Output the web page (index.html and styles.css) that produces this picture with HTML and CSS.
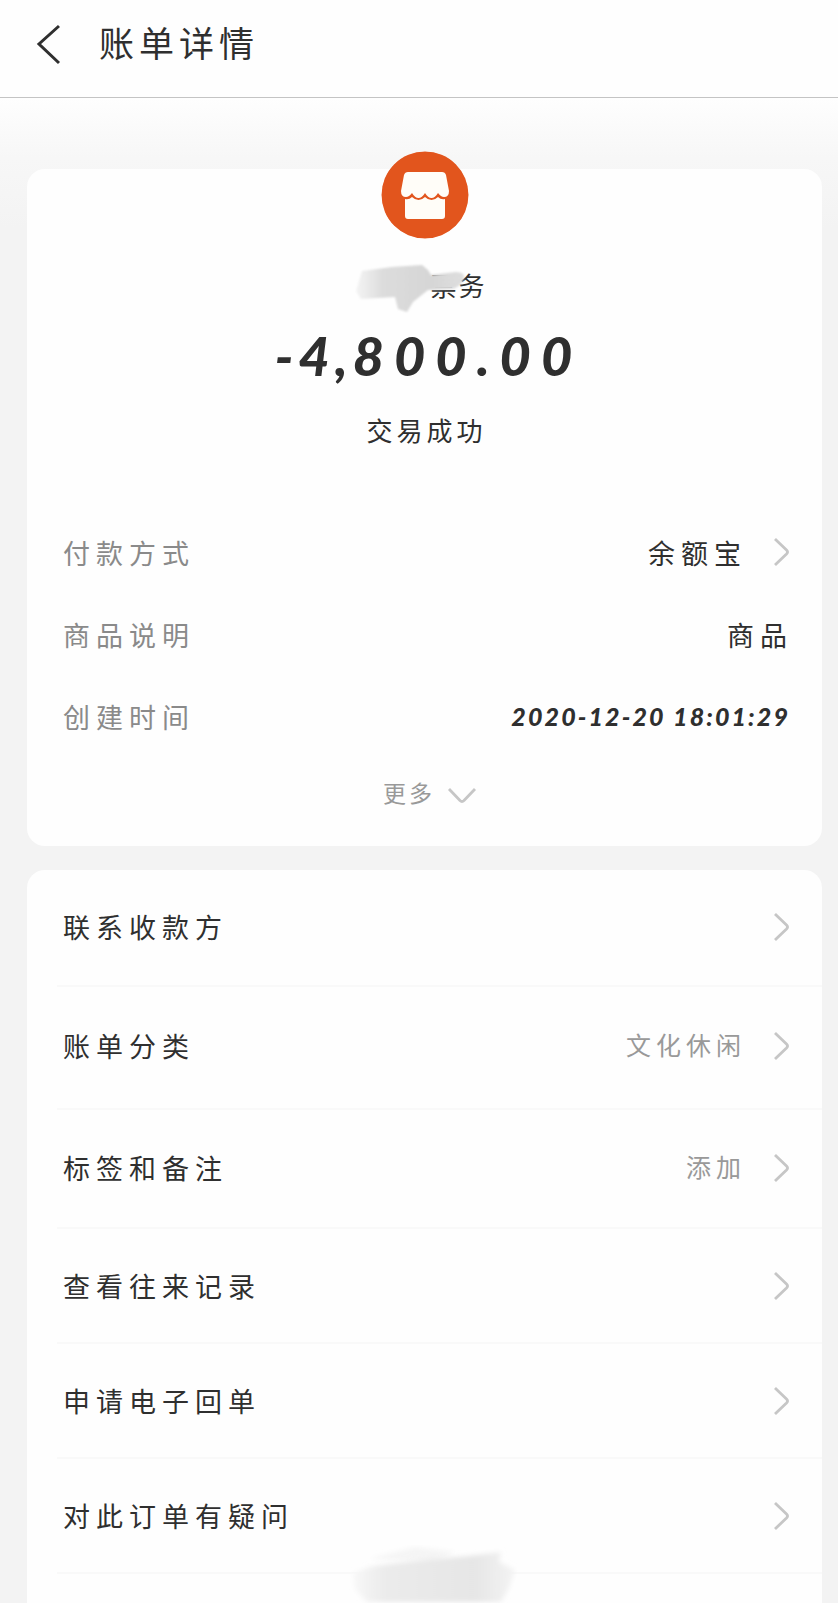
FILE: index.html
```html
<!DOCTYPE html>
<html lang="zh-CN">
<head>
<meta charset="utf-8">
<title>账单详情</title>
<link rel="stylesheet" href="styles.css">
</head>
<body>
<header class="topbar">
  <svg class="back" width="26" height="42" viewBox="0 0 26 42"><path d="M23 3 3 21l20 19"/></svg>
  <h1 class="title">账单详情</h1>
</header>
<main class="page">
  <section class="card summary">
    <svg class="shop" width="88" height="88" viewBox="0 0 88 88">
      <circle cx="44" cy="44" r="43.5" fill="#e2551d"/>
      <path d="M27 21h34q3 0 4 3l3 16q0 6-5 6-3 0-6-4-3 5-6.500 5T44 42q-3 5-6.500 5T31 42q-3 4-6 4-5 0-5-6l3-16q1-3 4-3z" fill="#fffdf8"/>
      <path d="M24 48q4 1 7-2 3 3 6.500 3t6.500-3q3 3 6.500 3t6.500-3q3 3 7 2v17q0 3-3 3H27q-3 0-3-3z" fill="#fffdf8"/>
    </svg>
    <div class="merchant">
      <span>票务</span>
      <svg class="smudge" width="140" height="60" viewBox="0 0 140 60">
        <defs>
          <linearGradient id="g1"><stop offset="0" stop-color="#f4f4f4"/><stop offset=".25" stop-color="#dcdcdc"/><stop offset=".7" stop-color="#d6d6d6"/><stop offset="1" stop-color="#dedede"/></linearGradient>
          <filter id="b1"><feGaussianBlur stdDeviation="1.3"/></filter>
        </defs>
        <path d="M12 13 42 9l30-2 6 5 3 5 25-3q9 0 8 6-3 9-12 11l-24 1-15 12-6 10-9-3-3-12-34 2-5-8z" fill="url(#g1)" filter="url(#b1)"/>
      </svg>
    </div>
    <div class="amount"><span class="lead">-4,</span>800.00</div>
    <div class="status">交易成功</div>
    <dl class="details">
      <div class="item"><dt>付款方式</dt><dd>余额宝</dd><svg class="chev" width="17" height="30" viewBox="0 0 17 30"><path d="M2 2l11.500 11q2 2 0 4L2 28"/></svg></div>
      <div class="item"><dt>商品说明</dt><dd class="last">商品</dd></div>
      <div class="item"><dt>创建时间</dt><dd class="date">2020-12-20 18:01:29</dd></div>
    </dl>
    <div class="more"><span>更多</span><svg class="chev" width="30" height="17" viewBox="0 0 30 17"><path d="M2 2l11 11.500q2 2 4 0L28 2"/></svg></div>
  </section>
  <nav class="card menu">
    <a class="row"><span>联系收款方</span><svg class="chev" width="17" height="30" viewBox="0 0 17 30"><path d="M2 2l11.500 11q2 2 0 4L2 28"/></svg></a>
    <a class="row"><span>账单分类</span><em>文化休闲</em><svg class="chev" width="17" height="30" viewBox="0 0 17 30"><path d="M2 2l11.500 11q2 2 0 4L2 28"/></svg></a>
    <a class="row"><span>标签和备注</span><em>添加</em><svg class="chev" width="17" height="30" viewBox="0 0 17 30"><path d="M2 2l11.500 11q2 2 0 4L2 28"/></svg></a>
    <a class="row"><span>查看往来记录</span><svg class="chev" width="17" height="30" viewBox="0 0 17 30"><path d="M2 2l11.500 11q2 2 0 4L2 28"/></svg></a>
    <a class="row"><span>申请电子回单</span><svg class="chev" width="17" height="30" viewBox="0 0 17 30"><path d="M2 2l11.500 11q2 2 0 4L2 28"/></svg></a>
    <a class="row"><span>对此订单有疑问</span><svg class="chev" width="17" height="30" viewBox="0 0 17 30"><path d="M2 2l11.500 11q2 2 0 4L2 28"/></svg></a>
    <svg class="footmark" width="180" height="62" viewBox="0 0 180 62">
      <defs>
        <linearGradient id="g2"><stop offset="0" stop-color="#f8f8f8"/><stop offset=".2" stop-color="#ebebeb"/><stop offset=".75" stop-color="#e6e6e6"/><stop offset="1" stop-color="#f4f4f4"/></linearGradient>
        <filter id="b2"><feGaussianBlur stdDeviation="2.500"/></filter>
      </defs>
      <path d="M24 18 70 6l40 5-20 10z" fill="#f5f5f5" filter="url(#b2)"/>
      <path d="M8 32 28 25l50-6 46-4 32-4-2 10 16 8-6 18-8 14H22L10 48z" fill="url(#g2)" filter="url(#b2)"/>
    </svg>
  </nav>
</main>
</body>
</html>
```
FILE: styles.css
```css
* { box-sizing: border-box; }
body {
  margin: 0;
  width: 838px;
  height: 1603px;
  overflow: hidden;
  background: #fefefe;
  color: #2f2f2f;
  font-family: "Noto Sans CJK SC", sans-serif;
}
.topbar {
  display: flex;
  align-items: center;
  gap: 37px;
  height: 98px;
  padding: 0 36px 10px;
  border-bottom: 1px solid #c4c4c4;
}
.back { fill: none; stroke: #2f2f2f; stroke-width: 3; }
.title { margin: 0 0 3px; font-size: 35px; line-height: 50px; font-weight: 400; letter-spacing: 5px; }
.page {
  display: flex;
  flex-direction: column;
  gap: 24px;
  height: 1505px;
  padding: 71px 16px 0 27px;
  background: linear-gradient(#fefefe 0, #f7f7f7 60px, #f3f3f3 130px);
}
.card { flex: none; background: #fefefe; border-radius: 18px; }
.summary {
  display: flex;
  flex-direction: column;
  align-items: center;
  height: 677px;
}
.shop { flex: none; margin-top: -18px; border-radius: 50%; }
.merchant { position: relative; margin-top: 27px; padding-left: 68px; font-size: 26px; line-height: 38px; letter-spacing: 2px; }
.smudge { position: absolute; left: -12px; top: -8px; }
.amount {
  margin: 22px 0 0 8px;
  font: italic 900 54px/60px Lato, "Liberation Sans", sans-serif;
  letter-spacing: 10px;
}
.lead { letter-spacing: 5px; }
.status { margin: 25px 0 0 4px; font-size: 26px; line-height: 38px; letter-spacing: 4px; }
.details { align-self: stretch; margin: 62px 0 0; padding: 0 32px 0 36px; }
.item { display: flex; align-items: center; height: 82px; font-size: 27px; letter-spacing: 6px; }
.item dt { flex: 1; color: #8a8a8a; }
.item dd { margin: 0 -6px 0 0; }
.item .last { margin-right: -3px; }
.item .chev { margin-left: 32px; }
.item .date { margin-right: 0; font: italic 900 25px/36px Lato, "Liberation Sans", sans-serif; letter-spacing: 2.1px; }
.more { display: flex; align-items: center; gap: 12px; height: 70px; padding-left: 11px; color: #999; font-size: 23px; letter-spacing: 3px; }
.more .chev { margin-top: 6px; }
.chev { flex: none; fill: none; stroke: #c6c6c6; stroke-width: 2.8; }
.menu { position: relative; height: 740px; border-radius: 18px 18px 0 0; padding-left: 30px; }
.row {
  display: flex;
  align-items: center;
  height: 117px;
  padding: 0 32px 2px 6px;
  border-bottom: 2px solid #f9f9f9;
  font-size: 27px;
  letter-spacing: 6px;
}
.row:nth-child(2) { height: 123px; padding-bottom: 4px; }
.row:nth-child(3) { height: 119px; }
.row:nth-child(n+4) { height: 115px; padding-bottom: 0; }
.row span { flex: 1; }
.row em { margin: 0 27px 3px 0; color: #999; font-size: 25px; font-style: normal; letter-spacing: 5px; }
.footmark { position: absolute; left: 318px; top: 671px; }
```
